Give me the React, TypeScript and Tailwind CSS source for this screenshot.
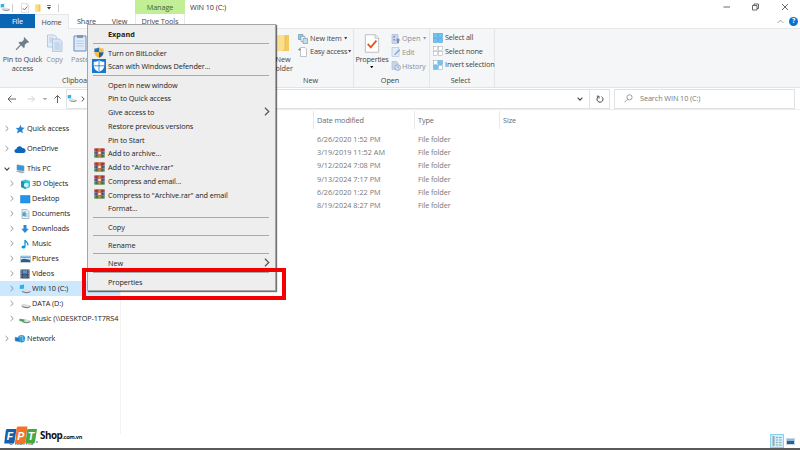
import React from 'react';

type IconProps = { className?: string };

const DriveIcon: React.FC<IconProps & { kind?: 'win' | 'plain' | 'net' }> = ({ className = '', kind = 'win' }) => (
  <svg viewBox="0 0 12 10" className={`shrink-0 ${className}`}>
    {kind === 'win' && <path d="M.8 1.200L5 .6v4.200L.8 5z" fill="#27b4e8" />}
    <path d="M2 5.800l3-1 6.500 1.700v1L8 9 2 7.200z" fill="#d9dcde" />
    <path d="M3 7.300L8 8.500l3.500-1.300v.8L8 9.300 3 8z" fill="#4b5157" />
    {kind === 'net' && <path d="M.4 4.800l5 .8v2.200l-5-.8z" fill="#43a758" />}
  </svg>
);

const CheckPage: React.FC<IconProps> = ({ className = '' }) => (
  <svg viewBox="0 0 16 20" className={`shrink-0 ${className}`}>
    <path d="M1 .8h10.5L15 4.2v15H1z" fill="#fff" stroke="#a9adb1" strokeWidth=".8" />
    <path d="M11.3 1v3.5H15" fill="none" stroke="#a9adb1" strokeWidth=".8" />
    <path d="M3.500 10.500l3.200 3.500 6-7" fill="none" stroke="#dc5a28" strokeWidth="2" />
  </svg>
);

const FolderIcon: React.FC<IconProps> = ({ className = '' }) => (
  <svg viewBox="0 0 14 18" className={`shrink-0 ${className}`}>
    <path d="M1 1h12v16H1z" fill="#f4c95d" />
    <path d="M1 1h8v14l-2 2H1z" fill="#fbdf8c" />
    <path d="M9 1v14l-2 2" fill="none" stroke="#e2b145" strokeWidth=".6" />
  </svg>
);

const Chevron: React.FC<IconProps & { color?: string }> = ({ className = 'h-[7px] w-[4px]', color = '#777' }) => (
  <svg viewBox="0 0 4 6" className={`shrink-0 ${className}`}>
    <path d="M.6.5L3.2 3 .6 5.5" fill="none" stroke={color} strokeWidth=".8" />
  </svg>
);

const ChevronDown: React.FC<IconProps & { color?: string }> = ({ className = 'h-[4px] w-[6px]', color = '#444' }) => (
  <svg viewBox="0 0 6 4" className={`shrink-0 ${className}`}>
    <path d="M.6.7L3 3.1 5.4.7" fill="none" stroke={color} strokeWidth="1.1" />
  </svg>
);

const Caret: React.FC<IconProps> = ({ className = '' }) => (
  <svg viewBox="0 0 4 3" className={`h-[2.4px] w-[3.4px] shrink-0 ${className}`}>
    <path d="M0 0h4L2 3z" fill="currentColor" />
  </svg>
);

const RarIcon: React.FC = () => (
  <svg viewBox="0 0 11 10" className="h-[10px] w-[11px]">
    <path d="M.3.4h10.4v3.1H.3z" fill="#c0392f" />
    <path d="M.3 3.5h10.4v3H.3z" fill="#4560b8" />
    <path d="M.3 6.5h10.4v3.1H.3z" fill="#3d9345" />
    <path d="M2.500.4h.7v9.2h-.7zM7.800.4h.7v9.2h-.7z" fill="#6c4050" />
    <path d="M4.4.4h2.2v9.2H4.4z" fill="#c98c49" />
    <path d="M3.5 3.2h4v3.4h-4z" fill="#d9553c" />
    <path d="M4.3 3.800h2.400v2.200H4.300z" fill="#fff4dd" />
  </svg>
);

const ShieldIcon: React.FC = () => (
  <svg viewBox="0 0 10 11" className="h-[11px] w-[10px]">
    <path d="M5 .3C3.6 1.3 2.1 1.6.4 1.6v3.600H5z" fill="#2c6cab" />
    <path d="M5 .3c1.4 1 2.9 1.3 4.6 1.3v3.600H5z" fill="#f2bd37" />
    <path d="M.4 5.200H5v5.600C2.200 9.700.5 7.900.4 5.200z" fill="#f2bd37" />
    <path d="M5 5.200h4.600C9.500 7.900 7.800 9.700 5 10.800z" fill="#2c5f93" />
  </svg>
);

const DefenderIcon: React.FC = () => (
  <svg viewBox="0 0 14 14" className="h-[14px] w-[14px]">
    <path d="M0 0h14v14H0z" fill="#1478d0" />
    <path d="M7 1.300c1.500 1 3.300 1.500 5.300 1.500V6.500c0 3-2 5.200-5.300 6.500C3.700 11.700 1.700 9.500 1.700 6.500V2.800c2 0 3.800-.5 5.300-1.500z" fill="#fff" />
    <path d="M7 1v12M1.500 6.800h11" stroke="#1478d0" strokeWidth=".8" />
  </svg>
);

const menuIcons = { shield: ShieldIcon, defender: DefenderIcon, rar: RarIcon };

type MenuEntry = { label: string; icon?: keyof typeof menuIcons; bold?: boolean; sub?: boolean } | null;

// null entries are separators
const menu: MenuEntry[] = [
  { label: 'Expand', bold: true },
  null,
  { label: 'Turn on BitLocker', icon: 'shield' },
  { label: 'Scan with Windows Defender...', icon: 'defender' },
  null,
  { label: 'Open in new window' },
  { label: 'Pin to Quick access' },
  { label: 'Give access to', sub: true },
  { label: 'Restore previous versions' },
  { label: 'Pin to Start' },
  { label: 'Add to archive...', icon: 'rar' },
  { label: 'Add to "Archive.rar"', icon: 'rar' },
  { label: 'Compress and email...', icon: 'rar' },
  { label: 'Compress to "Archive.rar" and email', icon: 'rar' },
  { label: 'Format...' },
  null,
  { label: 'Copy' },
  null,
  { label: 'Rename' },
  null,
  { label: 'New', sub: true },
  null,
  { label: 'Properties' },
];

const ContextMenu: React.FC = () => (
  <div className="absolute left-[87px] top-[24px] h-[267px] w-[189px] border border-[#a5a5a5] bg-[#eeeeee] pt-[2px] text-[#1c1c1c] shadow-[1px_1px_1px_rgba(0,0,0,0.55)]">
    {menu.map((entry, i) => {
      if (!entry) {
        return (
          <div key={i} className="flex h-[4.550px] items-center pl-[5px] pr-[6px]">
            <div className="h-px w-full bg-[#aaaaaa]" />
          </div>
        );
      }
      const Icon = entry.icon && menuIcons[entry.icon];
      return (
        <div key={i} className="flex h-[13.750px] items-center">
          <div className="flex w-[20px] shrink-0 justify-center pl-[2px]">{Icon && <Icon />}</div>
          <span className={entry.bold ? 'pt-px font-bold tracking-[0.020px]' : 'pt-px'}>{entry.label}</span>
          {entry.sub && <Chevron className="ml-auto mr-[5px] h-[9px] w-[6px]" color="#555" />}
        </div>
      );
    })}
  </div>
);

const treeIcons: Record<string, React.ReactNode> = {
  star: <path d="M6.500.8l1.100 2.700 3.100.3-2.400 2.200.6 3.200-2.600-1.500L3 9.500l.9-3.400L1.800 4l3.300-.3z" fill="#2586d8" />,
  cloud: <path d="M3 9C-.4 9-.2 5.200 2.400 5 3 1.800 7 1.300 8.300 4c3.800-.2 4.600 4.500 1 5z" fill="#0d68bd" />,
  pc: (
    <>
      <path d="M3 .800l7 1.200V7L3 6z" fill="#2e9bdc" stroke="#7798ad" strokeWidth=".6" />
      <path d="M1.500 7.200l3-.7 6.500 1.500-2.500 1.400z" fill="#9eb1bf" />
    </>
  ),
  cube: (
    <>
      <path d="M2 2l4.500-1.500L11 2v6L6.500 10 2 8z" fill="#36c3d9" />
      <path d="M2 2l4.500 1.600V10L2 8z" fill="#1596b5" />
      <path d="M5 4.500l2.500-.8 2 .8v3l-2 1-2.500-1z" fill="#c9f2f5" />
    </>
  ),
  desktop: <path d="M1.500 1.500h9.500v7.500H1.500z" fill="#2196ec" stroke="#1675c4" strokeWidth=".5" />,
  doc: (
    <>
      <path d="M3 .5h5l2 2v7H3z" fill="#e9f3fa" stroke="#8094a3" strokeWidth=".6" />
      <path d="M4.500 3h2.500M4.500 5h4M4.500 7h4" stroke="#5a8fb5" strokeWidth=".8" />
      <path d="M3.500 3.500h3V7h-3z" fill="#4a9ed7" />
    </>
  ),
  down: <path d="M4.500 1h3v3.800h2.300L6 9 2.200 4.800h2.300z" fill="#2e86d6" />,
  music: (
    <>
      <path d="M6 1v6.500M6 1c.5 2 3.500 2.300 3 5.500" fill="none" stroke="#0c94de" strokeWidth="1.300" />
      <ellipse cx="4.500" cy="8" rx="2" ry="1.500" fill="#0c94de" />
    </>
  ),
  picture: (
    <>
      <path d="M1.500 2h10v6.500h-10z" fill="#dfeffa" stroke="#8ba4b5" strokeWidth=".5" />
      <path d="M2 5.500L5 4.800l6 1V8H2z" fill="#285f88" />
      <path d="M2 2.500h9v1.500H2z" fill="#59aee6" />
    </>
  ),
  video: (
    <>
      <path d="M1.500.5h9v9h-9z" fill="#343b45" />
      <path d="M3.500 1.200h5v3.500h-5z" fill="#5e94c8" />
      <path d="M3.500 5.300h5V9h-5z" fill="#3f6aa6" />
      <path d="M2.400 1v8.500M9.600 1v8.500" stroke="#e5e5e5" strokeWidth=".7" strokeDasharray=".8 .8" />
    </>
  ),
  network: (
    <>
      <circle cx="7.500" cy="4.700" r="3.700" fill="#3498d6" />
      <path d="M6 2.500c2-1 3 .5 2.500 2S9.500 7 10.500 6" fill="none" stroke="#a5dcf5" strokeWidth=".8" />
      <path d="M1 3l5 1v4L1 7z" fill="#1c77bd" stroke="#9fb8c8" strokeWidth=".5" />
    </>
  ),
};

const tree = [
  { label: 'Quick access', icon: 'star', root: true },
  { label: 'OneDrive', icon: 'cloud', root: true },
  { label: 'This PC', icon: 'pc', root: true, open: true },
  { label: '3D Objects', icon: 'cube' },
  { label: 'Desktop', icon: 'desktop' },
  { label: 'Documents', icon: 'doc' },
  { label: 'Downloads', icon: 'down' },
  { label: 'Music', icon: 'music' },
  { label: 'Pictures', icon: 'picture' },
  { label: 'Videos', icon: 'video' },
  { label: 'WIN 10 (C:)', icon: 'win', selected: true },
  { label: 'DATA (D:)', icon: 'plain' },
  { label: 'Music (\\\\DESKTOP-1T7RS4', icon: 'net' },
  { label: 'Network', icon: 'network', root: true },
];

const NavTree: React.FC = () => (
  <div className="flex w-[121px] shrink-0 flex-col overflow-hidden border-r border-[#f3f3f3] pt-[11px] text-[#222]">
    {tree.map((n) => (
      <div
        key={n.label}
        className={`flex h-[15px] shrink-0 items-center whitespace-nowrap ${n.root ? 'mb-[5px] pl-[4px] last:mt-[5px]' : 'pl-[9px]'} ${n.open ? 'mb-0!' : ''} ${n.selected ? 'bg-[#cce8ff]' : ''}`}
      >
        <span className="flex w-[6px] justify-center">{n.open ? <ChevronDown /> : <Chevron />}</span>
        <span className="ml-[4px] mr-px">
          {treeIcons[n.icon] ? (
            <svg viewBox="0 0 12 10" className="h-[10px] w-[12px]">{treeIcons[n.icon]}</svg>
          ) : (
            <DriveIcon kind={n.icon as 'win' | 'plain' | 'net'} className="h-[10px] w-[12px]" />
          )}
        </span>
        <span className="-mt-px">{n.label}</span>
      </div>
    ))}
  </div>
);

const TitleBar: React.FC = () => (
  <div className="flex h-[14px] shrink-0 text-[#333]">
    <div className="flex w-[135px] items-center pt-[1px]">
      <DriveIcon className="h-[9px] w-[10px]" />
      <div className="ml-[2px] h-[8px] w-px bg-[#ccc]" />
      <CheckPage className="ml-[8px] h-[10px] w-[8px]" />
      <FolderIcon className="ml-[6px] h-[8px] w-[6px]" />
      <svg viewBox="0 0 4 5" className="ml-[6px] h-[5px] w-[4px]">
        <path d="M0 .5h4" stroke="#333" strokeWidth=".7" />
        <path d="M0 2h4L2 4.500z" fill="#333" />
      </svg>
      <div className="ml-[7px] h-[8px] w-px bg-[#ccc]" />
    </div>
    <div className="flex w-[50px] items-center justify-center bg-[#c2ef96] text-[#3f6334]">Manage</div>
    <span className="ml-[5px] mt-[2px]">WIN 10 (C:)</span>
    <div className="ml-auto flex items-center pr-[11px]">
      <svg viewBox="0 0 66 8" className="h-[8px] w-[66px]" fill="none" stroke="#444" strokeWidth=".8">
        <path d="M.5 4h6.500M29.500 2.500h4.500v4.500h-4.500zM31 2.500V1h4.500v4.500H34M59 1l6 6M65 1l-6 6" />
      </svg>
    </div>
  </div>
);

const TabRow: React.FC = () => (
  <div className="flex h-[15px] shrink-0 items-stretch border-b border-[#e6e7e9] text-[#444]">
    <div className="flex w-[35px] items-center justify-center bg-[#0a66b4] text-white">File</div>
    <div className="-mb-px flex w-[34px] items-center justify-center border-r border-t border-[#e6e7e9] bg-[#f5f6f7] pb-px">Home</div>
    <div className="flex w-[35px] items-center justify-center">Share</div>
    <div className="flex w-[31px] items-center justify-center">View</div>
    <div className="flex w-[50px] items-center justify-center border-x border-[#e9ebe7]">Drive Tools</div>
    <div className="ml-auto flex items-center pr-[2px]">
      <svg viewBox="0 0 7 5" className="mr-[5px] h-[5px] w-[7px]">
        <path d="M.6 4L3.500 1.100 6.400 4" fill="none" stroke="#888" strokeWidth=".8" />
      </svg>
      <div className="flex h-[9px] w-[9px] items-center justify-center rounded-full bg-[#0872cf] text-[7px] font-bold text-white">?</div>
    </div>
  </div>
);

const Grid: React.FC<{ fills: string[]; stroke: string }> = ({ fills, stroke }) => (
  <svg viewBox="0 0 10 10" className="h-[10px] w-[10px] shrink-0" stroke={stroke} strokeWidth=".5">
    <rect x=".5" y=".5" width="4.200" height="4.200" fill={fills[0]} />
    <rect x="5.300" y=".5" width="4.200" height="4.200" fill={fills[1]} />
    <rect x=".5" y="5.300" width="4.200" height="4.200" fill={fills[2]} />
    <rect x="5.300" y="5.300" width="4.200" height="4.200" fill={fills[3]} />
  </svg>
);

const Ribbon: React.FC = () => (
  <div className="flex h-[59px] shrink-0 border-b border-[#e2e3e4] bg-[#f5f6f7] leading-[9px] text-[#444]">
    <div className="flex w-[150px] flex-col">
      <div className="flex h-[47px] pt-[4px] text-center">
        <div className="flex w-[45px] flex-col items-center">
          <svg viewBox="0 0 14 14" className="mb-[4px] mt-[3px] h-[15px] w-[15px]">
            <path d="M8.500 1l4.800 4.800-1.200.6-.9-.2-2.200 2.200c.4 1.300.1 2.300-.6 3L3.200 6.200c.8-.8 1.800-1 3-.6l2.200-2.200-.3-1z" fill="#717d88" />
            <path d="M5.500 8L1 13" stroke="#717d88" strokeWidth="1.200" />
          </svg>
          <span className="whitespace-nowrap">Pin to Quick<br />access</span>
        </div>
        <div className="flex w-[19px] flex-col items-center text-[#8b8f93]">
          <svg viewBox="0 0 16 18" className="mb-[3px] mt-[1px] h-[18px] w-[17px]" stroke="#a3b9d8" strokeWidth=".7">
            <path d="M1 1h7l2 2v10H1z" fill="#e4edf8" />
            <path d="M6 5h7l2.500 2.500V17.500H6z" fill="#d9e6f5" />
            <path d="M8 9h5M8 11h6M8 13h6M8 15h6M2.500 4h4M2.500 6h3M2.500 8h3" />
          </svg>
          Copy
        </div>
        <div className="ml-[6px] flex w-[20px] flex-col items-center text-[#8b8f93]">
          <svg viewBox="0 0 14 18" className="mb-[3px] mt-[1px] h-[18px] w-[14px]">
            <path d="M1 2h12v15H1z" fill="#dfe9f7" stroke="#6d8cbd" />
            <path d="M4 1h6v3H4z" fill="#8497b2" />
            <path d="M3.500 7h7M3.500 9.500h7M3.500 12h7" stroke="#aec2df" strokeWidth=".7" />
          </svg>
          Paste
        </div>
      </div>
      <span className="pl-[62px]">Clipboard</span>
    </div>
    <div className="flex w-[204px] flex-col border-r border-[#e4e5e7]">
      <div className="flex h-[47px] pl-[123px] pt-[3px]">
        <div className="flex w-[20px] flex-col items-center text-center">
          <FolderIcon className="mb-[3px] mt-[2px] h-[18px] w-[14px]" />
          New folder
        </div>
        <div className="ml-[5px] flex flex-col">
          <div className="flex h-[13px] items-center">
            <svg viewBox="0 0 10 10" className="mr-[2px] h-[10px] w-[10px]" stroke="#6c8ba3" strokeWidth=".6">
              <path d="M.5.500h4.500v5H.5z" fill="#92c9e8" />
              <path d="M3 2.500h4v5H3z" fill="#fff" />
              <path d="M5 4.500h4.500v5H5z" fill="#c1dff1" />
            </svg>
            New item <Caret className="ml-[2px]" />
          </div>
          <div className="flex h-[13px] items-center whitespace-nowrap tracking-[-0.170px]">
            <svg viewBox="0 0 10 10" className="mr-[2px] h-[10px] w-[10px] shrink-0" stroke="#94a0a9" strokeWidth=".6">
              <path d="M2.500.500H7L8.500 2v7.500h-6z" fill="#fff" />
              <path d="M0 2.500h3M1.500 1v3" stroke="#3690ca" />
            </svg>
            Easy access <Caret className="ml-[1px]" />
          </div>
        </div>
      </div>
      <span className="pl-[153px]">New</span>
    </div>
    <div className="flex w-[76px] flex-col border-r border-[#e4e5e7]">
      <div className="flex h-[47px] pt-[3px]">
        <div className="flex w-[36px] flex-col items-center tracking-[-0.220px]">
          <CheckPage className="mb-[2px] mt-[2px] h-[19px] w-[16px]" />
          Properties
          <Caret className="mt-[2px] text-black" />
        </div>
        <div className="ml-[1px] flex flex-col text-[#8b9096]">
          <div className="flex h-[13px] items-center">
            <svg viewBox="0 0 10 10" className="mr-[1px] h-[10px] w-[10px]">
              <path d="M1 .500h6v9H1z" fill="#c9d8ed" stroke="#a5b7d3" strokeWidth=".6" />
              <path d="M2.500 2h1.500v1.500H2.500zM2.500 5h1.500v1.500H2.500zM7 4l2.500 2.500H8V9H6V6.500H4.500z" fill="#788fb5" />
            </svg>
            Open <Caret className="ml-[3px]" />
          </div>
          <div className="flex h-[14px] items-center">
            <svg viewBox="0 0 10 10" className="mr-[1px] h-[10px] w-[10px]">
              <path d="M1 .500h7v9H1z" fill="#e3edf8" stroke="#a9c0dc" strokeWidth=".6" />
              <path d="M3 7.500l5-5.500 1.200 1.200-5 5z" fill="#8badd4" />
            </svg>
            Edit
          </div>
          <div className="flex h-[14px] items-center">
            <svg viewBox="0 0 10 10" className="mr-[1px] h-[10px] w-[10px]">
              <path d="M1 .500h4.500L7 2v6.500H1z" fill="#c7d5e8" stroke="#a9b9d0" strokeWidth=".6" />
              <circle cx="6.700" cy="6.600" r="2.800" fill="#d7e5f6" stroke="#829fca" strokeWidth=".8" />
              <path d="M6.700 5v1.700H8" fill="none" stroke="#829fca" strokeWidth=".7" />
            </svg>
            History
          </div>
        </div>
      </div>
      <span className="pr-[3px] text-center">Open</span>
    </div>
    <div className="flex w-[65px] flex-col border-r border-[#e4e5e7]">
      <div className="flex h-[47px] flex-col whitespace-nowrap pl-[3px] pt-[2px] tracking-[-0.160px]">
        <div className="flex h-[13.500px] items-center gap-[2px]"><Grid fills={['#70c4f4', '#70c4f4', '#70c4f4', '#70c4f4']} stroke="#3a93cc" />Select all</div>
        <div className="flex h-[13.500px] items-center gap-[2px]"><Grid fills={['#fff', '#fff', '#fff', '#fff']} stroke="#a5a9ad" />Select none</div>
        <div className="flex h-[13.500px] items-center gap-[2px]"><Grid fills={['#fff', '#70c4f4', '#70c4f4', '#fff']} stroke="#6ca6cb" />Invert selection</div>
      </div>
      <span className="pr-[3px] text-center">Select</span>
    </div>
  </div>
);

const AddressRow: React.FC = () => (
  <div className="flex h-[22px] shrink-0 items-center border-b border-[#ececec] text-[#777]">
    <svg viewBox="0 0 66 10" className="h-[10px] w-[66px] shrink-0" fill="none" stroke="#555" strokeWidth=".9">
      <path d="M8 5h8M11.500 1.500L8 5l3.500 3.500M43.500 4L45 5.500 46.500 4M57.500 9V1.500M54.500 4.500l3-3 3 3" />
      <path d="M27.500 5h7M31.500 2l3 3-3 3" stroke="#ccc" />
    </svg>
    <div className="flex h-[20px] w-[544px] items-center border border-[#e2e2e2] bg-white">
      <DriveIcon className="h-[9px] w-[10px]" />
      <Chevron className="ml-[4px] h-[6px] w-[4px]" color="#333" />
      <div className="ml-auto flex h-full items-center">
        <ChevronDown className="mr-[6px] h-[4px] w-[6px]" />
        <div className="flex h-full w-[20px] items-center justify-center border-l border-[#e2e2e2]">
          <svg viewBox="0 0 8 8" className="h-[8px] w-[8px]" fill="none" stroke="#444" strokeWidth="1">
            <path d="M5.500 1.600A3 3 0 1 1 2.200 1.800M.8 1.200h2.200v2.200" />
          </svg>
        </div>
      </div>
    </div>
    <div className="ml-[4px] flex h-[20px] w-[181px] items-center border border-[#e2e2e2] pl-[9px]">
      <svg viewBox="0 0 9 9" className="mr-[7px] h-[9px] w-[9px]" fill="none" stroke="#777" strokeWidth=".7">
        <circle cx="5.500" cy="3.300" r="2.600" />
        <path d="M3.700 5.100L.5 8.300" />
      </svg>
      <span className="-mt-px">Search WIN 10 (C:)</span>
    </div>
  </div>
);

const dates = [
  '6/26/2020 1:52 PM',
  '3/19/2019 11:52 AM',
  '9/12/2024 7:08 PM',
  '9/13/2024 7:17 PM',
  '6/26/2020 1:22 PM',
  '8/19/2024 8:27 PM',
];

const FileList: React.FC = () => (
  <div className="flex-1 pl-[192px] pt-[1px] text-[#777]">
    <div className="grid h-[18px] grid-cols-[101px_85px_1fr] text-[#5b6b80]">
      {['Date modified', 'Type', 'Size'].map((h) => (
        <div key={h} className="flex items-center border-l border-[#e8e8e8] pb-px pl-[3px]">{h}</div>
      ))}
    </div>
    <div className="pt-[3px]">
      {dates.map((d) => (
        <div key={d} className="grid h-[13.330px] grid-cols-[101px_85px_1fr] items-center">
          <span className="pl-[4px] tracking-[-0.010px]">{d}</span>
          <span className="pl-[4px]">File folder</span>
        </div>
      ))}
    </div>
  </div>
);

const ShopLogo: React.FC = () => (
  <div className="absolute left-[4px] top-[426px] flex items-center">
    <svg viewBox="0 0 35 21" className="h-[21px] w-[35px]">
      <path d="M3 3h9.500L10.500 16q-.3 1.500-1.500 1.500H.2L1.800 4.500Q2 3 3 3z" fill="#1560ad" />
      <path d="M14 .5h9.500L21.500 16q-.5 2-2 2h-8.500L12.500 2.500Q12.800.500 14 .500z" fill="#f37429" />
      <path d="M24 3h9L31 16Q30.700 17.500 29 17.500h-7.500L23 4.500Q23.200 3 24 3z" fill="#45a942" />
      <g fill="#fff" className="font-['Liberation_Sans'] text-[10.500px] font-bold italic">
        <text x="2.800" y="14">F</text>
        <text x="13.200" y="14">P</text>
        <text x="23.800" y="14">T</text>
      </g>
      <circle cx="33" cy="16" r=".8" fill="#2461a5" />
    </svg>
    <span className="ml-px mt-[-1px] text-[9.800px] font-bold tracking-[-0.450px] text-[#111]">
      Shop<span className="text-[5.600px] tracking-[-0.300px]">.com.vn</span>
    </span>
  </div>
);

const StatusBar: React.FC = () => (
  <div className="flex h-[16px] shrink-0 items-center justify-between border-b-2 border-[#5a5a5a] pl-[9px] text-[#555]">
    <span className="pt-px">0 items</span>
    <div className="flex items-center gap-[2px] pr-[5px]">
      <div className="flex h-[14px] w-[14px] items-center justify-center border border-[#8cd0ec] bg-[#cdeefa]">
        <svg viewBox="0 0 10 10" className="h-[10px] w-[10px]">
          <path d="M.5 0h2v10h-2z" fill="#9ba7ad" />
          <path d="M4 1.500h2M7 1.500h2.500M4 4h2M7 4h2.500M4 6.500h2M7 6.500h2.500M4 9h2M7 9h2.500" stroke="#84959e" strokeWidth=".8" />
        </svg>
      </div>
      <svg viewBox="0 0 9 7" className="h-[7px] w-[9px]">
        <path d="M.3.300h8.400v6.400H.3z" fill="#d8eefb" stroke="#a8b6c0" strokeWidth=".6" />
        <path d="M1 3h7v3H1z" fill="#315d8b" />
        <path d="M1 1h7v2H1z" fill="#82bce9" />
      </svg>
    </div>
  </div>
);

export default function App() {
  return (
    <div className="relative flex h-[450px] w-[800px] flex-col overflow-hidden bg-white font-['Open_Sans','Noto_Sans',sans-serif] text-[7.300px] leading-[10px] tracking-[-0.100px]">
      <TitleBar />
      <TabRow />
      <Ribbon />
      <AddressRow />
      <div className="flex min-h-0 flex-1">
        <NavTree />
        <FileList />
      </div>
      <StatusBar />
      <ContextMenu />
      <div className="absolute left-[82px] top-[268px] h-[32px] w-[204px] border-[4.500px] border-[#f40000]" />
      <ShopLogo />
    </div>
  );
}
